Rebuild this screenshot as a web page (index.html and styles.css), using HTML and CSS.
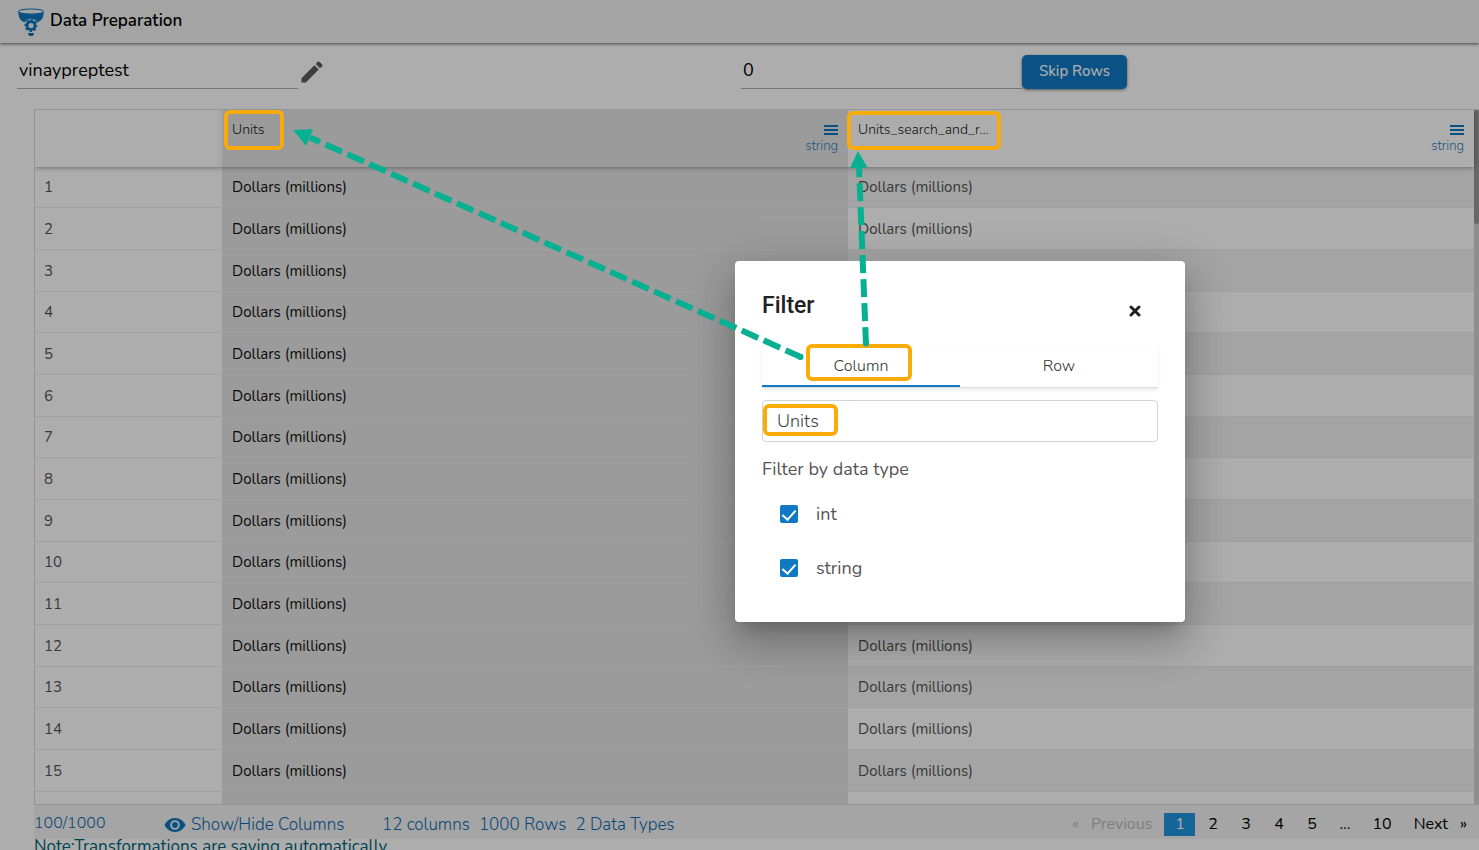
FILE: index.html
```html
<!DOCTYPE html>
<html lang="en">
<head>
    <meta charset="UTF-8">
    <meta name="viewport" content="width=device-width, initial-scale=1.0">
    <title>Data Preparation</title>
    <link rel="stylesheet" href="styles.css">
</head>
<body>

<div class="page">

    <header class="topbar">
        <svg class="logo" viewBox="0 0 28 28" width="28" height="28">
            <path d="M1 3.500 L2 9 Q3 12 7.500 14.500 A7.500 7.500 0 0 1 20.500 14.500 Q25 12 26 9 L27 3.500 Q14 9 1 3.500Z" fill="#0b77be"/>
            <ellipse cx="14" cy="3.500" rx="12.800" ry="2.500" fill="#f2f2f2" stroke="#0b77be" stroke-width="1"/>
            <circle cx="14" cy="17.500" r="4" fill="none" stroke="#0b77be" stroke-width="2.800"/>
            <circle cx="14" cy="17.500" r="5.700" fill="none" stroke="#0b77be" stroke-width="1.600" stroke-dasharray="2.480 2" stroke-dashoffset="1.200"/>
            <path d="M11 25.800h6M12 27.300h4" stroke="#0b77be" stroke-width="1.400"/>
        </svg>
        <h1 class="title">Data Preparation</h1>
    </header>

    <div class="toolbar">
        <div class="field">
            <input class="line-input" type="text" value="vinaypreptest" aria-label="Name">
            <button class="icon-btn" aria-label="Edit name">
                <svg viewBox="0 0 24 24" width="28" height="28"><path d="M3 17.250V21h3.750L17.810 9.940l-3.750-3.750L3 17.250zM20.710 7.040a1 1 0 0 0 0-1.410l-2.340-2.340a1 1 0 0 0-1.410 0l-1.830 1.830 3.750 3.750 1.830-1.830z" fill="#5c5c5c"/></svg>
            </button>
        </div>
        <div class="field">
            <input class="line-input" type="text" value="0" aria-label="Rows to skip">
            <button class="skip-btn">Skip Rows</button>
        </div>
    </div>

    <main class="content">
        <div class="grid">
            <div class="table-box">
                <table class="data">
                    <colgroup><col class="col-index"><col><col></colgroup>
                    <thead>
                        <tr>
                            <th class="corner" aria-label="Row"></th>
                            <th class="selected">
                                <div class="head">
                                    <span>Units</span>
                                    <span class="type"><svg viewBox="0 0 14 10" width="14" height="10"><path d="M0 1h14M0 5h14M0 9h14" stroke="#0b77be" stroke-width="2"/></svg>string</span>
                                </div>
                            </th>
                            <th>
                                <div class="head">
                                    <span>Units_search_and_r...</span>
                                    <span class="type"><svg viewBox="0 0 14 10" width="14" height="10"><path d="M0 1h14M0 5h14M0 9h14" stroke="#0b77be" stroke-width="2"/></svg>string</span>
                                </div>
                            </th>
                        </tr>
                    </thead>
                    <tbody>
                        <tr><td>1</td><td class="selected">Dollars (millions)</td><td>Dollars (millions)</td></tr>
                        <tr><td>2</td><td class="selected">Dollars (millions)</td><td>Dollars (millions)</td></tr>
                        <tr><td>3</td><td class="selected">Dollars (millions)</td><td>Dollars (millions)</td></tr>
                        <tr><td>4</td><td class="selected">Dollars (millions)</td><td>Dollars (millions)</td></tr>
                        <tr><td>5</td><td class="selected">Dollars (millions)</td><td>Dollars (millions)</td></tr>
                        <tr><td>6</td><td class="selected">Dollars (millions)</td><td>Dollars (millions)</td></tr>
                        <tr><td>7</td><td class="selected">Dollars (millions)</td><td>Dollars (millions)</td></tr>
                        <tr><td>8</td><td class="selected">Dollars (millions)</td><td>Dollars (millions)</td></tr>
                        <tr><td>9</td><td class="selected">Dollars (millions)</td><td>Dollars (millions)</td></tr>
                        <tr><td>10</td><td class="selected">Dollars (millions)</td><td>Dollars (millions)</td></tr>
                        <tr><td>11</td><td class="selected">Dollars (millions)</td><td>Dollars (millions)</td></tr>
                        <tr><td>12</td><td class="selected">Dollars (millions)</td><td>Dollars (millions)</td></tr>
                        <tr><td>13</td><td class="selected">Dollars (millions)</td><td>Dollars (millions)</td></tr>
                        <tr><td>14</td><td class="selected">Dollars (millions)</td><td>Dollars (millions)</td></tr>
                        <tr><td>15</td><td class="selected">Dollars (millions)</td><td>Dollars (millions)</td></tr>
                        <tr><td></td><td class="selected"></td><td></td></tr>
                    </tbody>
                </table>
            </div>
            <div class="scrollbar"><div class="thumb"></div></div>
        </div>

        <footer class="footer">
            <span class="count">100/1000</span>
            <button class="show-hide">
                <svg viewBox="0 0 22 16" width="22" height="16"><path d="M11 1C6 1 2.500 4 .500 8c2 4 5.500 7 10.500 7s8.500-3 10.500-7c-2-4-5.500-7-10.500-7z" fill="#0b77be"/><circle cx="11" cy="8" r="4.800" fill="#f2f2f2"/><circle cx="11" cy="8" r="2.900" fill="#0b77be"/></svg>
                Show/Hide Columns
            </button>
            <div class="stats">
                <span>12 columns</span>
                <span>1000 Rows</span>
                <span>2 Data Types</span>
            </div>
            <nav class="pager" aria-label="Pages">
                <span class="off arrow">«</span>
                <span class="off">Previous</span>
                <a class="current" href="#">1</a>
                <a href="#">2</a>
                <a href="#">3</a>
                <a href="#">4</a>
                <a href="#">5</a>
                <span>...</span>
                <a href="#">10</a>
                <a href="#">Next</a>
                <a class="arrow" href="#">»</a>
            </nav>
        </footer>
        <p class="note">Note:Transformations are saving automatically</p>
    </main>
</div>

<div class="backdrop"></div>

<div class="dialog" role="dialog" aria-labelledby="filter-title">
    <div class="dialog-head">
        <h2 id="filter-title">Filter</h2>
        <button class="close" aria-label="Close">
            <svg viewBox="0 0 12 12" width="12" height="12"><path d="M2 2l8 8M10 2l-8 8" stroke="#212121" stroke-width="3" stroke-linecap="round"/></svg>
        </button>
    </div>
    <div class="tabs" role="tablist">
        <button class="tab active" role="tab" aria-selected="true">Column</button>
        <button class="tab" role="tab" aria-selected="false">Row</button>
    </div>
    <input class="search" type="text" value="Units" aria-label="Column name">
    <p class="label">Filter by data type</p>
    <label class="check"><input type="checkbox" checked><span>int</span></label>
    <label class="check"><input type="checkbox" checked><span>string</span></label>
</div>

<!-- callout boxes and arrows over the page -->
<svg class="callouts" width="1479" height="850" viewBox="0 0 1479 850">
    <g fill="none" stroke="#f9ac09" stroke-width="4">
        <rect x="226" y="112" width="56" height="36" rx="4"/>
        <rect x="849" y="113" width="150" height="35" rx="4"/>
        <rect x="808" y="346" width="102" height="33" rx="4"/>
        <rect x="765" y="406" width="71" height="28" rx="4"/>
    </g>
    <g fill="none" stroke="#08b092" stroke-width="6" stroke-dasharray="18 6">
        <path d="M802 357.500L310 137.500"/>
        <path d="M866 345L859 166"/>
    </g>
    <g fill="#08b092">
        <circle cx="800.500" cy="357" r="3"/>
        <circle cx="866" cy="343.500" r="3"/>
        <path d="M293 130L313 129L306 146z"/>
        <path d="M858 151L867.500 167.500L850 168z"/>
    </g>
</svg>

</body>
</html>
```
FILE: styles.css
```css
* {
    box-sizing: border-box;
}

body {
    margin: 0;
    height: 100vh;
    overflow: hidden;
    background-color: #fff;
    font-family: Nunito, "Open Sans", sans-serif;
    font-size: 15px;
    color: #000;
}

button, input {
    font-family: inherit;
}

button {
    border: 0;
    padding: 0;
    background: none;
    cursor: pointer;
}

svg {
    display: block;
}

/* top */
.topbar {
    display: flex;
    align-items: center;
    gap: 5px;
    height: 43px;
    padding: 0 17px;
    background-color: #f2f2f2;
    box-shadow: 0 1px 3px rgba(0, 0, 0, 0.6);
}

.title {
    margin: 0;
    font-size: 17px;
    font-weight: 600;
    line-height: 42px;
    height: 43px;
}

.toolbar {
    display: grid;
    grid-template-columns: 1fr 1fr;
    padding: 12px 14px 0 17px;
}

.field {
    display: flex;
    align-items: center;
    height: 34px;
}

.line-input {
    width: 281px;
    height: 34px;
    padding: 0 2px 3px;
    border: 0;
    border-bottom: 1px solid #b0b0b0;
    background: none;
    font-size: 18px;
}

.skip-btn {
    width: 105px;
    height: 34px;
    padding-bottom: 2px;
    border-radius: 5px;
    background-color: #0f79c4;
    box-shadow: 0 1px 3px rgba(0, 0, 0, 0.5);
    color: #fff;
    font-size: 15px;
    font-weight: 500;
}

/* table */
.content {
    padding: 20px 0 0 34px;
}

.grid {
    display: flex;
    height: calc(100vh - 154px);
    overflow: hidden;
    border: 1px solid #dcdcdc;
    border-right: 0;
}

.table-box {
    flex: 1;
}

.data {
    width: 100%;
    table-layout: fixed;
    border-spacing: 0;
}

.col-index {
    width: 187px;
}

.data th {
    height: 57px;
    padding: 9px 10px 0;
    vertical-align: top;
    text-align: left;
    font-size: 14px;
    font-weight: 300;
    color: #222;
}

.data thead {
    position: relative;
    box-shadow: 0 1px 5px rgba(0, 0, 0, 0.35);
}

.data .corner {
    border-right: 5px solid #f9f9f9;
}

.head {
    display: flex;
    justify-content: space-between;
    line-height: 22px;
}

.type {
    display: flex;
    flex-direction: column;
    align-items: flex-end;
    gap: 2px;
    padding-top: 6px;
    font-size: 13px;
    line-height: 18px;
    color: #2a85c4;
}

.data td {
    height: 42px;
    padding: 0 10px;
    border-bottom: 1px solid #ececec;
    color: #555;
}

.data tr:nth-child(3n+1) td {
    height: 41px;
}

.data tr:nth-child(odd) td {
    background-color: #f2f2f2;
}

.data td:first-child,
.data tr:nth-child(odd) td:first-child {
    padding-left: 9px;
    background-color: #fff;
}

.data th.selected,
.data td.selected,
.data tr:nth-child(odd) td.selected {
    background-color: #e5e5e5;
}

.data td.selected {
    color: #111;
}

.scrollbar {
    width: 5px;
    background-color: #d2d2d2;
}

.thumb {
    height: 114px;
    border-radius: 2px;
    background-color: #999;
}

/* footer */
.footer {
    display: flex;
    align-items: center;
    height: 34px;
    padding-top: 5px;
    background-color: #f3f3f3;
    color: #0f6ab0;
    font-size: 17px;
    font-weight: 300;
}

.count {
    width: 130px;
    padding-bottom: 3px;
    font-size: 16px;
}

.show-hide {
    display: flex;
    align-items: center;
    gap: 5px;
    width: 218px;
    font-size: 17px;
    font-weight: 300;
    color: inherit;
    white-space: nowrap;
}

.stats {
    display: flex;
    gap: 9px;
}

.pager {
    display: flex;
    gap: 2px;
    margin-left: auto;
    padding-right: 12px;
    font-size: 16px;
    font-weight: 400;
    line-height: 23px;
}

.pager a,
.pager span {
    min-width: 31px;
    padding: 0 10px;
    text-align: center;
    color: #000;
    text-decoration: none;
}

.pager .off {
    color: #bdbdbd;
}

.pager .arrow {
    min-width: 0;
    padding: 0;
}

.pager .current {
    background-color: #2196e0;
    color: #fff;
}

.note {
    margin: 0;
    font-size: 17px;
    line-height: 16px;
    color: #006479;
}

/* filter dialog */
.backdrop {
    position: absolute;
    inset: 0;
    background-color: rgba(0, 0, 0, 0.32);
}

.dialog {
    position: absolute;
    top: 261px;
    left: 735px;
    width: 450px;
    padding: 27px;
    border-radius: 4px;
    background-color: #fff;
    box-shadow: 0 11px 15px -7px rgba(0, 0, 0, 0.2), 0 24px 38px 3px rgba(0, 0, 0, 0.14), 0 9px 46px 8px rgba(0, 0, 0, 0.12);
    color: #555;
}

.dialog-head {
    display: flex;
    justify-content: space-between;
    height: 57px;
}

.dialog-head h2 {
    margin: 0;
    font-family: Roboto, sans-serif;
    font-size: 23px;
    font-weight: 500;
    line-height: 35px;
    color: #212121;
}

.close {
    height: 46px;
    padding: 0 17px;
}

.tabs {
    display: flex;
    height: 43px;
    border-bottom: 1px solid #dcdcdc;
    box-shadow: 0 2px 4px rgba(0, 0, 0, 0.08);
}

.tab {
    flex: 1;
    border-bottom: 2px solid transparent;
    padding-top: 1px;
    font-size: 16px;
    font-weight: 300;
    color: #333;
}

.tab.active {
    border-bottom-color: #0f79c4;
}

.search {
    display: block;
    width: 100%;
    height: 42px;
    margin-top: 12px;
    padding: 0 14px;
    border: 1px solid #ced4da;
    border-radius: 4px;
    font-size: 18px;
    font-weight: 300;
    color: #3a4047;
}

.label {
    margin: 14px 0 4px;
    font-size: 18px;
    line-height: 27px;
}

.check {
    display: flex;
    align-items: center;
    gap: 18px;
    height: 54px;
    padding-left: 18px;
    font-size: 18px;
}

.check input {
    appearance: none;
    width: 18px;
    height: 18px;
    margin: 0;
    border-radius: 2px;
    background-color: #0f79c4;
}

.check input:checked::before {
    content: "";
    display: block;
    width: 6px;
    height: 11px;
    margin: 2px 0 0 5px;
    border: solid #fff;
    border-width: 0 2px 2px 0;
    transform: rotate(42deg);
}

.callouts {
    position: absolute;
    top: 0;
    left: 0;
    pointer-events: none;
}
```
